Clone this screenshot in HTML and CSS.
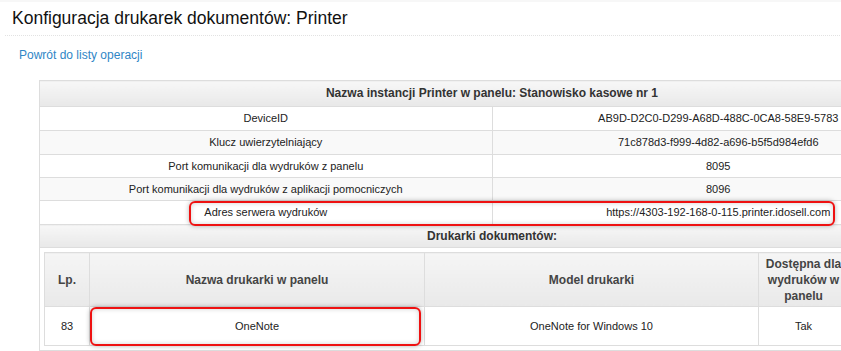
FILE: index.html
```html
<!DOCTYPE html>
<html lang="pl">
<head>
<meta charset="utf-8">
<title>Konfiguracja drukarek dokumentów: Printer</title>
<link rel="stylesheet" href="styles.css">
</head>
<body>
<div class="page">
  <h1 class="title">Konfiguracja drukarek dokumentów: Printer</h1>
  <div class="back"><a href="#" class="back-link">Powrót do listy operacji</a></div>

  <table class="config">
    <colgroup><col class="c-half"><col class="c-half"></colgroup>
    <tr><th colspan="2" class="head">Nazwa instancji Printer w panelu: Stanowisko kasowe nr 1</th></tr>
    <tr class="odd"><td>DeviceID</td><td>AB9D-D2C0-D299-A68D-488C-0CA8-58E9-5783</td></tr>
    <tr class="even"><td>Klucz uwierzytelniający</td><td>71c878d3-f999-4d82-a696-b5f5d984efd6</td></tr>
    <tr class="odd tight"><td>Port komunikacji dla wydruków z panelu</td><td>8095</td></tr>
    <tr class="even tight"><td>Port komunikacji dla wydruków z aplikacji pomocniczych</td><td>8096</td></tr>
    <tr class="odd"><td>Adres serwera wydruków</td><td>https://4303-192-168-0-115.printer.idosell.com</td></tr>
    <tr><th colspan="2" class="head sub">Drukarki dokumentów:</th></tr>
    <tr>
      <td colspan="2" class="holder">
        <table class="printers">
          <colgroup>
            <col class="w-lp"><col class="w-name"><col class="w-model"><col class="w-avail"><col>
          </colgroup>
          <tr>
            <th>Lp.</th>
            <th>Nazwa drukarki w panelu</th>
            <th>Model drukarki</th>
            <th>Dostępna dla wydruków w panelu</th>
            <th></th>
          </tr>
          <tr>
            <td>83</td>
            <td>OneNote</td>
            <td>OneNote for Windows 10</td>
            <td>Tak</td>
            <td></td>
          </tr>
        </table>
      </td>
    </tr>
  </table>

  <div class="mark mark-server"></div>
  <div class="mark mark-printer"></div>
</div>
</body>
</html>
```

FILE: styles.css
```css
html, body {
  margin: 0;
  padding: 0;
  background: #ffffff;
  overflow: hidden;
}

body {
  font-family: "Liberation Sans", Arial, sans-serif;
  color: #333333;
}

.page {
  position: relative;
  width: 960px;
  border-top: 2px solid #f7f7f7;
}

.title {
  margin: 0 0 0 5px;
  padding: 6px 0 7px 7px;
  font-size: 17.5px;
  line-height: 20px;
  font-weight: normal;
  color: #111111;
  border-bottom: 1px dotted #e2e2e2;
}

.back {
  margin-top: 12px;
  padding-left: 19px;
  font-size: 12px;
  line-height: 14px;
}

.back-link {
  color: #2f86c6;
  text-decoration: none;
}

.config {
  margin: 18px 0 0 39px;
  width: 906px;
  border-collapse: collapse;
  table-layout: fixed;
  border: 1px solid #d9d9d9;
}

.c-half {
  width: 50%;
}

.config td,
.config th {
  border: 1px solid #dddddd;
  text-align: center;
  vertical-align: middle;
}

.config .head {
  padding: 5px;
  font-size: 12px;
  line-height: 15px;
  font-weight: bold;
  color: #333333;
  background: linear-gradient(#f7f7f7, #e8e8e8);
}

.config .head.sub {
  padding: 4px 5px 3px;
}

.config td {
  padding: 5px;
  font-size: 11px;
  line-height: 13px;
  color: #222222;
}

.config .tight td {
  padding: 5px 5px 4px;
}

.config .odd td {
  background: #ffffff;
}

.config .even td {
  background: #f9f9f9;
}

.config td.holder {
  padding: 4px;
  background: #ffffff;
}

.printers {
  width: 100%;
  border-collapse: collapse;
  table-layout: fixed;
}

.w-lp { width: 45px; }
.w-name { width: 335px; }
.w-model { width: 334px; }
.w-avail { width: 90px; }

.printers th,
.printers td {
  border: 1px solid #dddddd;
  text-align: center;
  vertical-align: middle;
}

.printers th {
  padding: 3px 4px 2px;
  font-size: 12px;
  line-height: 16px;
  font-weight: bold;
  color: #444444;
  background: linear-gradient(#f5f5f5, #e9e9e9);
}

.printers td {
  padding: 12px 4px;
  font-size: 11px;
  line-height: 14px;
  color: #222222;
  background: #ffffff;
}

.mark {
  position: absolute;
  box-sizing: border-box;
  border: 2px solid #ee1111;
  border-radius: 6px;
  box-shadow: 0 0 5px rgba(0, 0, 0, 0.3), inset 0 0 5px rgba(0, 0, 0, 0.18);
  pointer-events: none;
}

.mark-server {
  left: 189px;
  top: 199px;
  width: 646px;
  height: 25px;
}

.mark-printer {
  left: 90px;
  top: 305px;
  width: 331px;
  height: 39px;
}
```
